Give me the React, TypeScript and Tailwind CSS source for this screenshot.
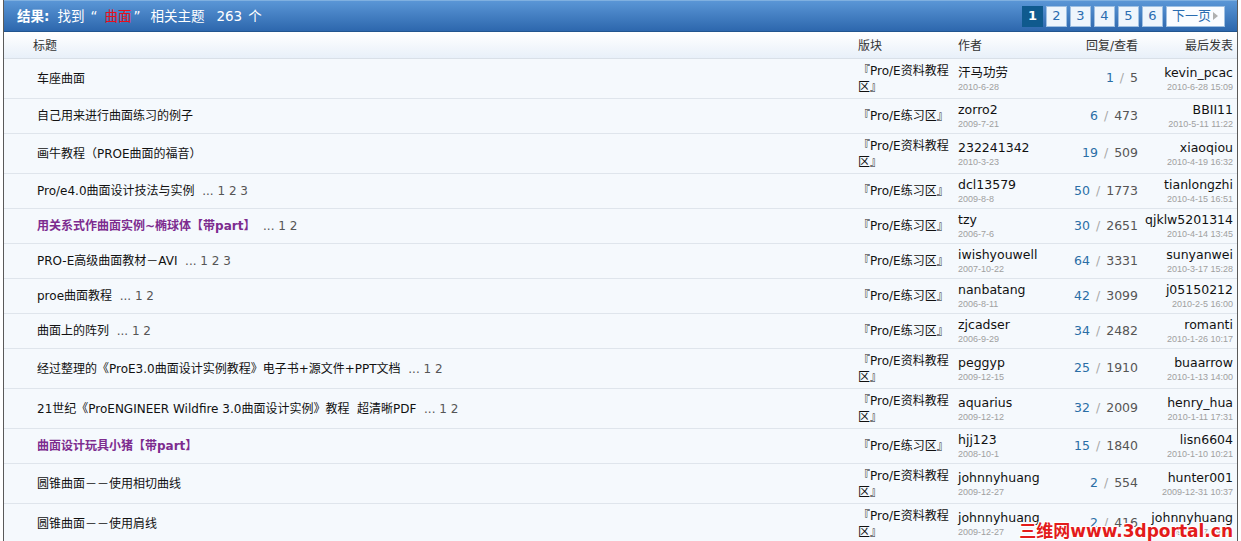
import React from 'react';

type Topic = {
  title: string;
  bold?: boolean;
  pages?: number[];
  forum: 'ziliao' | 'lianxi';
  author: string;
  authorDate: string;
  replies: number;
  views: number;
  last: string;
  lastDate: string;
};

const topics: Topic[] = [
  { title: '车座曲面', forum: 'ziliao', author: '汗马功劳', authorDate: '2010-6-28', replies: 1, views: 5, last: 'kevin_pcac', lastDate: '2010-6-28 15:09' },
  { title: '自己用来进行曲面练习的例子', forum: 'lianxi', author: 'zorro2', authorDate: '2009-7-21', replies: 6, views: 473, last: 'BBII11', lastDate: '2010-5-11 11:22' },
  { title: '画牛教程（PROE曲面的福音）', forum: 'ziliao', author: '232241342', authorDate: '2010-3-23', replies: 19, views: 509, last: 'xiaoqiou', lastDate: '2010-4-19 16:32' },
  { title: 'Pro/e4.0曲面设计技法与实例', pages: [1, 2, 3], forum: 'lianxi', author: 'dcl13579', authorDate: '2009-8-8', replies: 50, views: 1773, last: 'tianlongzhi', lastDate: '2010-4-15 16:51' },
  { title: '用关系式作曲面实例~椭球体【带part】', bold: true, pages: [1, 2], forum: 'lianxi', author: 'tzy', authorDate: '2006-7-6', replies: 30, views: 2651, last: 'qjklw5201314', lastDate: '2010-4-14 13:45' },
  { title: 'PRO-E高级曲面教材－AVI', pages: [1, 2, 3], forum: 'lianxi', author: 'iwishyouwell', authorDate: '2007-10-22', replies: 64, views: 3331, last: 'sunyanwei', lastDate: '2010-3-17 15:28' },
  { title: 'proe曲面教程', pages: [1, 2], forum: 'lianxi', author: 'nanbatang', authorDate: '2006-8-11', replies: 42, views: 3099, last: 'j05150212', lastDate: '2010-2-5 16:00' },
  { title: '曲面上的阵列', pages: [1, 2], forum: 'lianxi', author: 'zjcadser', authorDate: '2006-9-29', replies: 34, views: 2482, last: 'romanti', lastDate: '2010-1-26 10:17' },
  { title: '经过整理的《ProE3.0曲面设计实例教程》电子书+源文件+PPT文档', pages: [1, 2], forum: 'ziliao', author: 'peggyp', authorDate: '2009-12-15', replies: 25, views: 1910, last: 'buaarrow', lastDate: '2010-1-13 14:00' },
  { title: '21世纪《ProENGINEER Wildfire 3.0曲面设计实例》教程  超清晰PDF', pages: [1, 2], forum: 'ziliao', author: 'aquarius', authorDate: '2009-12-12', replies: 32, views: 2009, last: 'henry_hua', lastDate: '2010-1-11 17:31' },
  { title: '曲面设计玩具小猪【带part】', bold: true, forum: 'lianxi', author: 'hjj123', authorDate: '2008-10-1', replies: 15, views: 1840, last: 'lisn6604', lastDate: '2010-1-10 10:21' },
  { title: '圆锥曲面－－使用相切曲线', forum: 'ziliao', author: 'johnnyhuang', authorDate: '2009-12-27', replies: 2, views: 554, last: 'hunter001', lastDate: '2009-12-31 10:37' },
  { title: '圆锥曲面－－使用肩线', forum: 'ziliao', author: 'johnnyhuang', authorDate: '2009-12-27', replies: 2, views: 416, last: 'johnnyhuang', lastDate: '2009-12-27 19:46' },
];

const font = 'font-["DejaVu_Sans","Noto_Sans_CJK_SC",sans-serif]';

function Row({ t }: { t: Topic }) {
  const tall = t.forum === 'ziliao';
  return (
    <div className={`flex items-center border-b border-[#dfe5ec] bg-[#f5f9fd] ${tall ? 'h-[40px]' : 'h-[35px]'}`}>
      <div className="flex-1 pl-[33px] text-[12px] whitespace-pre">
        <span className={t.bold ? 'font-bold text-[#7d2c8f]' : 'text-[#111]'}>{t.title}</span>
        {t.pages && <span className="text-[#555]">  ... {t.pages.join(' ')}</span>}
      </div>
      <div className="w-[100px] pr-[4px] text-[12px] leading-[16px] text-[#111]">
        {t.forum === 'ziliao' ? '『Pro/E资料教程区』' : '『Pro/E练习区』'}
      </div>
      <div className="w-[85px] flex flex-col">
        <span className="text-[12.5px] leading-[16px] text-[#111] whitespace-nowrap">{t.author}</span>
        <span className='font-["Liberation_Sans",sans-serif] text-[9px] leading-[12px] text-[#a0a0a0]'>{t.authorDate}</span>
      </div>
      <div className="w-[95px] text-right text-[12.5px] whitespace-pre">
        <span className="text-[#2a6ea6]">{t.replies}</span>
        <span className="mx-[6px] text-[#a9a9a9]">/</span>
        <span className="text-[#555]">{t.views}</span>
      </div>
      <div className="w-[95px] flex flex-col items-end">
        <span className="text-[12.5px] leading-[16px] text-[#111] whitespace-nowrap">{t.last}</span>
        <span className='font-["Liberation_Sans",sans-serif] text-[9px] leading-[12px] text-[#a0a0a0] whitespace-nowrap'>{t.lastDate}</span>
      </div>
      <div className="w-[4px]" />
    </div>
  );
}

export default function App() {
  return (
    <div className={`bg-white w-[1241px] ${font}`}>
      <div className="relative ml-[3px] w-[1235px] border-x border-[#5a5a5a]">
        {/* result bar */}
        <div className="flex h-[32px] items-center justify-between border-t border-[#7fb0e0] border-b border-b-[#22558f] bg-linear-to-b from-[#5a96d6] to-[#2d67ad] pl-[10px] pr-[12px] text-white">
          <div className="flex items-baseline whitespace-pre text-[13.5px]">
            <span className="ml-[3px] font-bold">结果:</span>
            <span className="ml-[8px]">找到</span>
            <span className="ml-[6px]">“</span>
            <span className="ml-[7px] text-[#e8101a]">曲面</span>
            <span className="ml-[2px]">”</span>
            <span className="ml-[10px]">相关主题</span>
            <span className="ml-[12px]">263</span>
            <span className="ml-[6px]">个</span>
          </div>
          <div className="flex gap-[3px] text-[13px]">
            <span className="flex h-[21px] w-[21px] items-center justify-center bg-[#0f5a8e] font-bold">1</span>
            {[2, 3, 4, 5, 6].map((n) => (
              <span key={n} className="flex h-[21px] w-[21px] items-center justify-center border border-[#9fc0e2] bg-[#eef5fc] text-[#2a6cb0]">{n}</span>
            ))}
            <span className="flex h-[21px] w-[59px] items-center gap-[2px] border border-[#9fc0e2] bg-[#fafcff] pl-[5px] text-[#2a6cb0]">
              下一页
              <svg width="5" height="8" viewBox="0 0 5 8"><path d="M0 0L5 4L0 8Z" fill="#b0b0b0" /></svg>
            </span>
          </div>
        </div>

        {/* column header */}
        <div className="flex h-[27px] items-center border-t border-white border-b border-b-[#d9e0e8] bg-linear-to-b from-white to-[#e8f0f9] text-[12px] text-[#333]">
          <div className="flex-1 pl-[29px]">标题</div>
          <div className="w-[100px]">版块</div>
          <div className="w-[85px]">作者</div>
          <div className="w-[95px] text-right">回复/查看</div>
          <div className="w-[95px] text-right">最后发表</div>
          <div className="w-[4px]" />
        </div>

        {topics.map((t, i) => (
          <Row key={i} t={t} />
        ))}

        <div className='absolute top-[519px] right-[4px] text-[17px] font-bold text-[#e31b1b] [text-shadow:1px_0_0_#fff,-1px_0_0_#fff,0_1px_0_#fff,0_-1px_0_#fff,1px_1px_0_#fff,-1px_-1px_0_#fff,1px_-1px_0_#fff,-1px_1px_0_#fff]'>
          三维网www.3dportal.cn
        </div>
      </div>
    </div>
  );
}
